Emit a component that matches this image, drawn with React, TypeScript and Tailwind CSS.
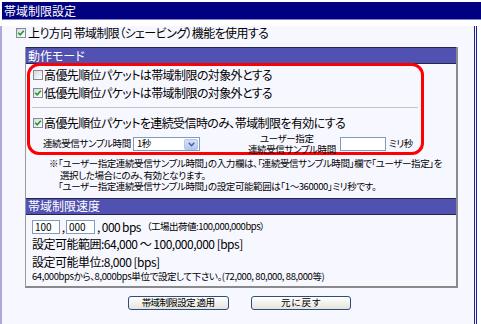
import React from 'react';

function Check({ checked }: { checked?: boolean }) {
  return (
    <span className="inline-flex w-[10px] h-[10px] shrink-0 items-center justify-center border border-[#7d8ba0] bg-gradient-to-br from-[#d9d9d4] to-white">
      {checked && (
        <svg width="8" height="8" viewBox="0 0 8 8">
          <path d="M1.2 3.8 L3.2 5.8 L6.8 1.8" stroke="#1f9a2c" strokeWidth="1.6" fill="none" />
        </svg>
      )}
    </span>
  );
}

function SectionHeader({ title }: { title: string }) {
  return (
    <div className="h-[17px] bg-[#5151b1] border-y border-[#26264a] text-white text-[12px] tracking-normal pl-[2px] flex items-center">
      {title}
    </div>
  );
}

function Button({ label, wide }: { label: string; wide?: boolean }) {
  return (
    <button
      className={`h-[14px] ${wide ? 'w-[101px]' : 'w-[100px]'} rounded-[3px] border border-[#2a4f7a] bg-gradient-to-b from-white to-[#e6e4da] text-[9.5px] leading-none text-black flex items-center justify-center`}
    >
      {label}
    </button>
  );
}

export default function App() {
  return (
    <div className="w-[481px] h-[324px] bg-white pt-[2px] text-black text-[12px] leading-none whitespace-nowrap tracking-[-0.6px] font-['Noto_Sans_CJK_JP','Noto_Sans_CJK_SC',sans-serif] [font-feature-settings:'palt']">
      {/* Title bar */}
      <div className="ml-[2px] h-[18px] bg-[#000080] border-b border-[#8080c8] text-white tracking-normal pl-[2px] flex items-center">
        帯域制限設定
      </div>

      {/* Panel body */}
      <div className="w-[477px] h-[301px] bg-[#f7f7ff] border-l-2 border-l-[#a9a9dd] border-b-[3px] border-b-[#a9a9dd] border-r-[3px] border-r-[#1e1e96] [border-right-style:double]">
        <div className="mt-[6px] h-[14px] pl-[14px] flex items-center gap-[2px]">
          <Check checked />
          <span>上り方向 帯域制限（シェービング）機能を使用する</span>
        </div>

        {/* Inner box */}
        <div className="ml-[23px] mt-[7px] w-[433px] h-[241px] border-l border-l-[#9a9a9a] border-r-2 border-r-[#8a8a8a] border-b-2 border-b-[#8a8a8a]">
          <SectionHeader title="動作モード" />

          {/* Highlighted group */}
          <div className="ml-[1px] -mt-px w-[397px] h-[92px] border-[3px] border-[#ff0000] rounded-[12px]">
            <div className="mt-[2px] h-[14px] pl-[3px] flex items-center gap-[1px]">
              <Check />
              <span>高優先順位パケットは帯域制限の対象外とする</span>
            </div>
            <div className="mt-[4px] h-[14px] pl-[3px] flex items-center gap-[1px]">
              <Check checked />
              <span>低優先順位パケットは帯域制限の対象外とする</span>
            </div>
            <div className="mt-[7px] ml-[2px] w-[386px] border-t border-[#c4c4c4]" />
            <div className="mt-[8px] h-[14px] pl-[3px] flex items-center gap-[1px]">
              <Check checked />
              <span>高優先順位パケットを連続受信時のみ、帯域制限を有効にする</span>
            </div>
            <div className="mt-[7px] h-[14px] pl-[13px] flex items-center text-[9.5px] tracking-[-0.4px]">
              <span className="w-[90px]">連続受信サンプル時間</span>
              <div className="w-[67px] h-[14px] border border-[#7f9db9] bg-white flex items-center justify-between pl-[3px] pr-px">
                <span>1秒</span>
                <span className="w-[14px] h-[11px] rounded-[2px] border border-[#b3c4ee] bg-gradient-to-b from-[#d4e0fc] to-[#b5c8f5] flex items-center justify-center">
                  <svg width="7" height="5" viewBox="0 0 7 5">
                    <path d="M0.8 0.8 L3.5 3.8 L6.2 0.8" stroke="#4a5d84" strokeWidth="1.4" fill="none" />
                  </svg>
                </span>
              </div>
              <div className="ml-[48px] w-[92px] leading-[11px]">
                <div className="pl-[12px]">ユーザー指定</div>
                <div>連続受信サンプル時間</div>
              </div>
              <div className="w-[46px] h-[14px] border border-[#7f9db9] bg-white" />
              <span className="ml-[3px]">ミリ秒</span>
            </div>
          </div>

          {/* Notes */}
          <div className="mt-[3px] pl-[23px] flex text-[9.5px] tracking-[-0.4px] leading-[11.5px]">
            <span className="w-[9px]">※</span>
            <div>
              <div>「ユーザー指定連続受信サンプル時間」の入力欄は、「連続受信サンプル時間」欄で「ユーザー指定」を</div>
              <div className="pl-[2px]">選択した場合にのみ、有効となります。</div>
              <div>「ユーザー指定連続受信サンプル時間」の設定可能範囲は「1～360000」ミリ秒です。</div>
            </div>
          </div>

          <div className="mt-[5px]">
            <SectionHeader title="帯域制限速度" />
          </div>

          <div className="mt-[5px] pl-[6px] h-[14px] flex items-center">
            <div className="w-[28px] h-[14px] border border-[#7f9db9] bg-white text-[10px] tracking-normal pl-[2px] flex items-center">100</div>
            <span className="w-[6px] text-center">,</span>
            <div className="w-[29px] h-[14px] border border-[#7f9db9] bg-white text-[10px] tracking-normal pl-[2px] flex items-center">000</div>
            <span className="ml-[2px]">, 000 bps</span>
            <span className="ml-[6px] text-[9.5px] tracking-[-0.5px]">（工場出荷値:100,000,000bps）</span>
          </div>
          <div className="mt-[3px] pl-[6px] h-[14px] flex items-center tracking-[-0.5px]">
            設定可能範囲:64,000 ～ 100,000,000 [bps]
          </div>
          <div className="mt-[4px] pl-[6px] h-[14px] flex items-center tracking-[-0.5px]">設定可能単位:8,000 [bps]</div>
          <div className="mt-[2px] pl-[6px] h-[12px] flex items-center text-[9.5px] tracking-[-0.4px]">
            64,000bpsから、8,000bps単位で設定して下さい。(72,000, 80,000, 88,000等)
          </div>
        </div>

        <div className="mt-[8px] flex justify-center gap-[22px] pl-[2px]">
          <Button label="帯域制限設定 適用" wide />
          <Button label="元 に 戻 す" />
        </div>
      </div>
    </div>
  );
}
